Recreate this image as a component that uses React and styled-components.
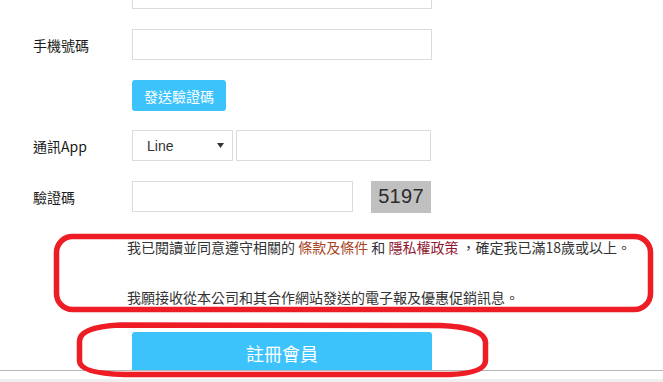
import React from 'react';
import styled, { createGlobalStyle } from 'styled-components';

const GlobalStyle = createGlobalStyle`
  html, body {
    margin: 0;
    padding: 0;
    background: #fff;
    font-family: 'Liberation Sans', 'Noto Sans CJK TC', sans-serif;
  }
`;

const Page = styled.div`
  position: relative;
  width: 663px;
  height: 382px;
  overflow: hidden;
  background: #fff;
`;

const Main = styled.div`
  height: 370px;
  overflow: hidden;
`;

const Form = styled.form`
  margin-top: -22px;
  padding-left: 33px;
`;

const Row = styled.div`
  display: flex;
  align-items: center;
  height: 31px;
  margin-bottom: ${(props) => props.gap ?? 20}px;
`;

const Label = styled.label`
  width: 99px;
  flex-shrink: 0;
  font-family: 'Noto Sans CJK TC', sans-serif;
  font-size: 14px;
  line-height: 20px;
  color: #1a1a1a;
`;

const Input = styled.input`
  box-sizing: border-box;
  width: ${(props) => props.w}px;
  height: ${(props) => props.h || 31}px;
  margin: 0 0 0 ${(props) => props.ml || 0}px;
  padding: 0 8px;
  border: 1px solid #dcdcdc;
  border-radius: 0;
  background: #fff;
  outline: none;
`;

const Spacer = styled.div`
  width: 99px;
  flex-shrink: 0;
`;

const SendButton = styled.button`
  box-sizing: border-box;
  width: 94px;
  height: 31px;
  padding: 0;
  border: none;
  border-radius: 3px;
  background: #3dc3fc;
  color: #fff;
  font-family: 'Noto Sans CJK TC', sans-serif;
  font-size: 14px;
`;

const SelectWrap = styled.div`
  position: relative;
  width: 101px;
  height: 31px;
`;

const Select = styled.select`
  box-sizing: border-box;
  width: 100%;
  height: 100%;
  padding: 0 0 0 14px;
  border: 1px solid #dcdcdc;
  border-radius: 0;
  background: #fff;
  color: #333;
  font-family: 'Liberation Sans', sans-serif;
  font-size: 14px;
  appearance: none;
  outline: none;
`;

const Arrow = styled.svg`
  position: absolute;
  top: 13px;
  left: 85px;
  pointer-events: none;
`;

const Captcha = styled.div`
  display: flex;
  align-items: center;
  justify-content: center;
  width: 60px;
  height: 32px;
  margin-left: 18px;
  background: #c0c0c0;
  color: #2b2b2b;
  font-family: 'Liberation Sans', sans-serif;
  font-size: 20px;
  letter-spacing: 0.3px;
`;

const Agree = styled.div`
  padding-left: 94px;
  margin: ${(props) => props.mt}px 0 0;
  font-family: 'Noto Sans CJK TC', sans-serif;
  font-size: 14px;
  line-height: 20px;
  color: #333;
  white-space: pre;
`;

const Link = styled.span`
  color: ${(props) => props.color};
`;

const Register = styled.button`
  display: block;
  box-sizing: border-box;
  width: 300px;
  height: 41px;
  margin: 25px 0 0 99px;
  padding: 0;
  border: none;
  border-radius: 3px;
  background: #3dc3fc;
  color: #fff;
  font-family: 'Noto Sans CJK TC', sans-serif;
  font-size: 18px;
`;

const Divider = styled.div`
  height: 1px;
  background: #b5b5b5;
`;

const BottomBar = styled.div`
  height: 3px;
  margin-top: 8px;
  background: #efefef;
`;

const Marks = styled.svg`
  position: absolute;
  top: 0;
  left: 0;
  pointer-events: none;
`;

const App = () => (
  <Page>
    <GlobalStyle />
    <Main>
      <Form onSubmit={(e) => e.preventDefault()}>
        <Row>
          <Spacer />
          <Input w={300} />
        </Row>
        <Row>
          <Label>手機號碼</Label>
          <Input w={300} />
        </Row>
        <Row gap={19}>
          <Spacer />
          <SendButton type="button">發送驗證碼</SendButton>
        </Row>
        <Row>
          <Label>通訊App</Label>
          <SelectWrap>
            <Select defaultValue="Line">
              <option>Line</option>
              <option>WeChat</option>
              <option>WhatsApp</option>
            </Select>
            <Arrow width="7" height="5" viewBox="0 0 7 5">
              <path d="M0 0h7L3.5 5z" fill="#333" />
            </Arrow>
          </SelectWrap>
          <Input w={195} ml={3} />
        </Row>
        <Row gap={0}>
          <Label>驗證碼</Label>
          <Input w={221} />
          <Captcha>5197</Captcha>
        </Row>
        <Agree mt={25}>
          我已閱讀並同意遵守相關的 <Link color="#a8461f">條款及條件</Link> 和 <Link color="#8f1830">隱私權政策</Link> ，確定我已滿18歲或以上。
        </Agree>
        <Agree mt={30}>我願接收從本公司和其合作網站發送的電子報及優惠促銷訊息。</Agree>
        <Register type="submit">註冊會員</Register>
      </Form>
    </Main>
    <Divider />
    <BottomBar />
    <Marks width="663" height="382" viewBox="0 0 663 382">
      <rect x="56.5" y="236.5" width="594" height="73" rx="16" fill="none" stroke="#ee1c25" strokeWidth="5.5" />
      <path
        d="M120 325 L440 325.5 Q484 327 485.5 342 L485.5 361 Q485 373 450 374.5 L125 374.5 Q80 373.5 79.5 361 L79.5 341 Q80 327 120 325 Z"
        fill="none"
        stroke="#ee1c25"
        strokeWidth="5.5"
      />
    </Marks>
  </Page>
);

export default App;
